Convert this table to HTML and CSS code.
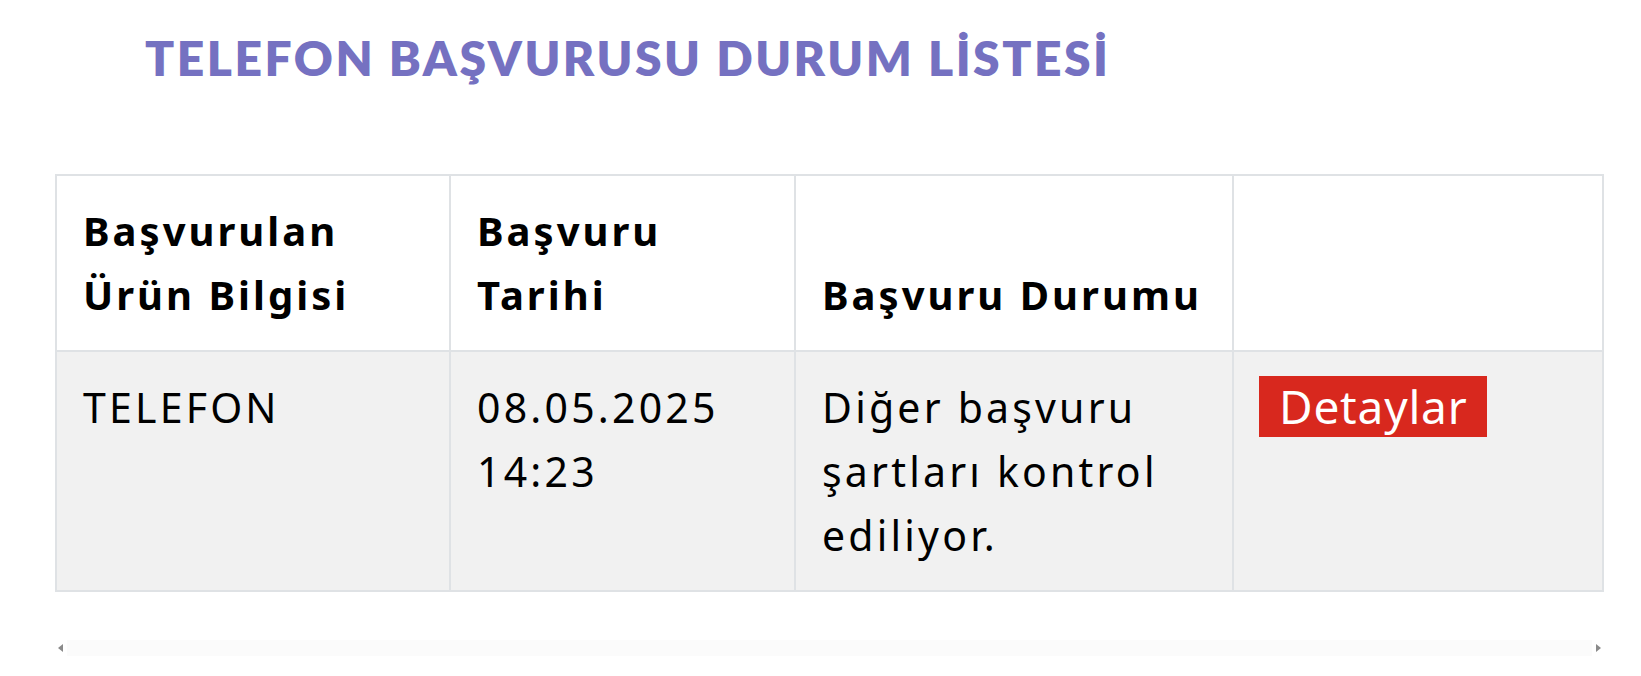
FILE: index.html
```html
<!DOCTYPE html>
<html lang="tr">
<head>
<meta charset="utf-8">
<title>Telefon Başvurusu Durum Listesi</title>
<link rel="stylesheet" href="styles.css">
</head>
<body>
<main class="page">
  <h1 class="page-title">TELEFON BAŞVURUSU DURUM LİSTESİ</h1>
  <div class="table-wrap">
    <table class="status-table">
      <colgroup>
        <col class="col-product">
        <col class="col-date">
        <col class="col-status">
        <col class="col-action">
      </colgroup>
      <thead>
        <tr>
          <th>Başvurulan<br>Ürün Bilgisi</th>
          <th>Başvuru<br>Tarihi</th>
          <th>Başvuru Durumu</th>
          <th></th>
        </tr>
      </thead>
      <tbody>
        <tr>
          <td>TELEFON</td>
          <td>08.05.2025<br>14:23</td>
          <td>Diğer başvuru<br>şartları kontrol<br>ediliyor.</td>
          <td class="cell-action"><a class="btn-detail" href="#">Detaylar</a></td>
        </tr>
      </tbody>
    </table>
  </div>
  <div class="scrollbar">
    <span class="arrow arrow-left"></span>
    <span class="track"></span>
    <span class="arrow arrow-right"></span>
  </div>
</main>
</body>
</html>
```
FILE: styles.css
```css
html, body {
  margin: 0;
  padding: 0;
  background: #ffffff;
}

body {
  font-family: "Noto Sans", Lato, "Liberation Sans", sans-serif;
  color: #000;
}

.page {
  padding: 0 39px 0 55px;
}

.page-title {
  margin: 0;
  padding: 22px 0 0 90px;
  font-family: Lato, "Noto Sans", sans-serif;
  font-size: 48px;
  line-height: 72px;
  font-weight: 800;
  letter-spacing: 2.5px;
  color: #7571c1;
}

.table-wrap {
  margin-top: 80px;
}

.status-table {
  width: 1547px;
  border-collapse: collapse;
  table-layout: fixed;
  border: 2px solid #dfe2e5;
}

.col-product { width: 394px; }
.col-date { width: 345px; }
.col-status { width: 438px; }
.col-action { width: 370px; }

.status-table th,
.status-table td {
  border: 2px solid #dfe2e5;
  padding: 23px 26px;
  text-align: left;
  line-height: 64px;
}

.status-table th {
  font-size: 40px;
  letter-spacing: 3px;
  font-weight: 700;
  vertical-align: bottom;
  background: #ffffff;
}

.status-table td {
  font-size: 41px;
  letter-spacing: 3.2px;
  font-weight: 400;
  vertical-align: top;
  background: #f1f1f1;
}

.status-table td.cell-action {
  padding-left: 25px;
  padding-top: 24px;
}

.btn-detail {
  display: inline-block;
  background: #d8281e;
  color: #ffffff;
  text-decoration: none;
  font-size: 46px;
  line-height: 61px;
  padding: 0 20px;
  letter-spacing: 0.8px;
}

.scrollbar {
  display: flex;
  align-items: center;
  gap: 4px;
  margin-top: 48px;
  padding-left: 3px;
  width: 1543px;
  height: 16px;
}

.track {
  flex: 1;
  height: 16px;
  background: #fbfbfb;
}

.arrow {
  width: 0;
  height: 0;
  border-top: 4px solid transparent;
  border-bottom: 4px solid transparent;
}

.arrow-left {
  border-right: 5px solid #8a8a8a;
}

.arrow-right {
  border-left: 5px solid #8a8a8a;
}
```
